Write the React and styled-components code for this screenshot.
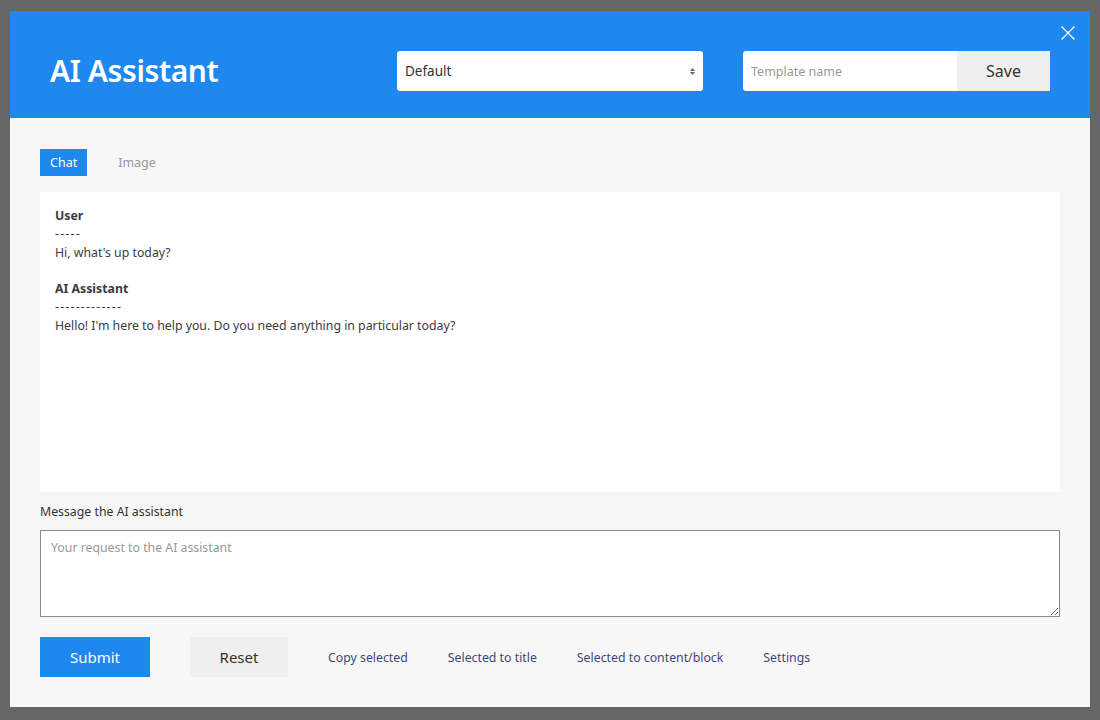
import React from 'react';
import styled, { createGlobalStyle } from 'styled-components';

const GlobalStyle = createGlobalStyle`
  html, body {
    margin: 0;
    padding: 0;
    background: #666666;
    font-family: "Noto Sans", "Open Sans", sans-serif;
  }
`;

const Overlay = styled.div`
  width: 1100px;
  height: 720px;
  background: #666666;
  padding: 11px 10px 13px;
  box-sizing: border-box;
`;

const Modal = styled.div`
  position: relative;
  width: 1080px;
  height: 696px;
  background: #f7f7f7;
  display: flex;
  flex-direction: column;
`;

const Header = styled.div`
  height: 107px;
  background: #1e88ef;
  display: flex;
  align-items: flex-start;
  padding: 40px 40px 0;
  box-sizing: border-box;
`;

const Title = styled.h1`
  margin: 0;
  color: #fff;
  font-size: 30px;
  line-height: 40px;
  font-weight: 600;
  width: 347px;
  letter-spacing: -0.4px;
`;

const SelectBox = styled.div`
  width: 306px;
  height: 40px;
  background: #fff;
  border-radius: 3px;
  display: flex;
  align-items: center;
  justify-content: space-between;
  padding: 0 8px;
  box-sizing: border-box;
  font-size: 13.5px;
  color: #333;
`;

const Arrows = styled.span`
  display: flex;
  flex-direction: column;
  gap: 1px;
  color: #666;
`;

const TemplateGroup = styled.div`
  display: flex;
  margin-left: 40px;
  height: 40px;
`;

const TemplateInput = styled.div`
  width: 214px;
  background: #fff;
  border-radius: 3px 0 0 3px;
  display: flex;
  align-items: center;
  padding: 0 8px;
  box-sizing: border-box;
  font-size: 12.5px;
  color: #999;
`;

const SaveButton = styled.button`
  width: 93px;
  border: none;
  background: #efefef;
  color: #333;
  font-family: inherit;
  font-size: 16px;
`;

const CloseButton = styled.button`
  position: absolute;
  top: 14px;
  right: 14px;
  width: 16px;
  height: 16px;
  padding: 0;
  border: none;
  background: none;
  display: flex;
`;

const Body = styled.div`
  flex: 1;
  padding: 31px 30px 30px;
  display: flex;
  flex-direction: column;
`;

const Tabs = styled.div`
  display: flex;
  gap: 21px;
  margin-bottom: 16px;
`;

const Tab = styled.button`
  height: 27px;
  padding: 0 10px;
  border: none;
  font-family: inherit;
  font-size: 12.5px;
  background: ${(p) => (p.$active ? '#1e88ef' : 'transparent')};
  color: ${(p) => (p.$active ? '#fff' : '#999')};
`;

const ChatLog = styled.div`
  height: 300px;
  background: #fff;
  padding: 15px;
  box-sizing: border-box;
  font-size: 12.3px;
  line-height: 18.3px;
  color: #3a3a44;
`;

const Author = styled.div`
  font-weight: 700;
`;

const Rule = styled.div`
  letter-spacing: 1.2px;
`;

const Gap = styled.div`
  height: 18.3px;
`;

const Label = styled.div`
  margin-top: 11px;
  font-size: 12.3px;
  line-height: 18px;
  color: #333;
`;

const TextArea = styled.textarea`
  margin-top: 9px;
  height: 87px;
  border: 1px solid #8a8a8a;
  background: #fff;
  padding: 8px 10px;
  box-sizing: border-box;
  font-family: inherit;
  font-size: 12.3px;
  color: #333;
  resize: vertical;
  &::placeholder {
    color: #999;
  }
`;

const Actions = styled.div`
  margin-top: 20px;
  display: flex;
  align-items: center;
  gap: 40px;
`;

const ActionButton = styled.button`
  height: 40px;
  width: ${(p) => p.$width}px;
  border: none;
  font-family: inherit;
  font-size: 15px;
  background: ${(p) => (p.$primary ? '#1e88ef' : '#efefef')};
  color: ${(p) => (p.$primary ? '#fff' : '#333')};
`;

const LinkButton = styled.span`
  font-size: 12.3px;
  color: #3f4778;
`;

export default function App() {
  return (
    <>
      <GlobalStyle />
      <Overlay>
        <Modal>
          <Header>
            <Title>AI Assistant</Title>
            <SelectBox>
              Default
              <Arrows>
                <svg width="5" height="3" viewBox="0 0 5 3"><path d="M0 3 L2.5 0 L5 3Z" fill="#666" /></svg>
                <svg width="5" height="3" viewBox="0 0 5 3"><path d="M0 0 L2.5 3 L5 0Z" fill="#666" /></svg>
              </Arrows>
            </SelectBox>
            <TemplateGroup>
              <TemplateInput>Template name</TemplateInput>
              <SaveButton>Save</SaveButton>
            </TemplateGroup>
          </Header>
          <CloseButton>
            <svg width="16" height="16" viewBox="0 0 16 16">
              <path d="M1.5 1.5 L14.5 14.5 M14.5 1.5 L1.5 14.5" stroke="#fff" strokeWidth="1.2" />
            </svg>
          </CloseButton>
          <Body>
            <Tabs>
              <Tab $active>Chat</Tab>
              <Tab>Image</Tab>
            </Tabs>
            <ChatLog>
              <Author>User</Author>
              <Rule>-----</Rule>
              <div>Hi, what's up today?</div>
              <Gap />
              <Author>AI Assistant</Author>
              <Rule>-------------</Rule>
              <div>Hello! I'm here to help you. Do you need anything in particular today?</div>
            </ChatLog>
            <Label>Message the AI assistant</Label>
            <TextArea placeholder="Your request to the AI assistant" />
            <Actions>
              <ActionButton $primary $width={110}>Submit</ActionButton>
              <ActionButton $width={98}>Reset</ActionButton>
              <LinkButton>Copy selected</LinkButton>
              <LinkButton>Selected to title</LinkButton>
              <LinkButton>Selected to content/block</LinkButton>
              <LinkButton>Settings</LinkButton>
            </Actions>
          </Body>
        </Modal>
      </Overlay>
    </>
  );
}
